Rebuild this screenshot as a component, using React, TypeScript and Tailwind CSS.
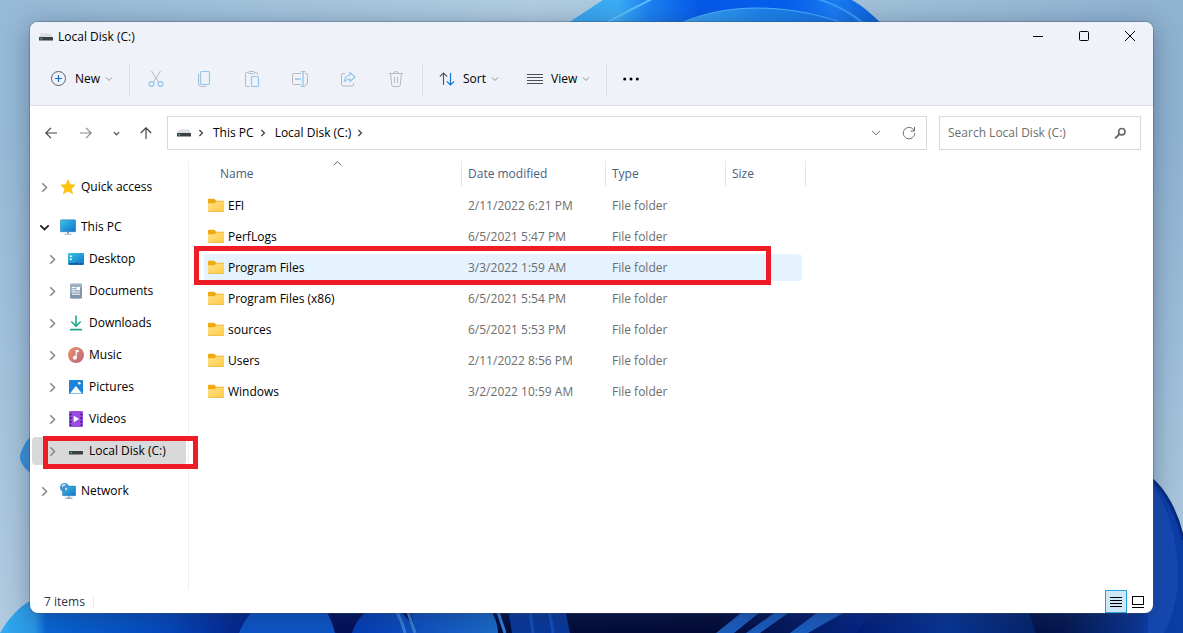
import React from "react";

type P = { className?: string };

const DriveIcon = ({ className = "" }: P) => (
  <svg viewBox="0 0 16 16" className={`h-4 w-4 shrink-0 ${className}`} aria-hidden="true">
    <path d="M3 4.5h10l1.800 4H1.200z" fill="#d9dde0" />
    <rect x="1" y="8" width="14" height="3.600" rx="0.6" fill="#3b3f42" />
    <rect x="2.500" y="9" width="1.600" height="1.400" fill="#2fd08a" />
  </svg>
);

const Chevron = ({ dir, className = "", size = 8 }: P & { dir: "right" | "down" | "up"; size?: number }) => {
  const d = { right: "M3 1.2 6.8 5 3 8.8", down: "M1.2 3 5 6.8 8.8 3", up: "M1 6.8 5 3 9 6.8" }[dir];
  return (
    <svg viewBox="0 0 10 10" width={size} height={size} className={`shrink-0 ${className}`} fill="none" stroke="currentColor" aria-hidden="true">
      <path d={d} />
    </svg>
  );
};

const FolderIcon = () => (
  <svg viewBox="0 0 16 16" className="h-4 w-4 shrink-0" aria-hidden="true">
    <defs>
      <linearGradient id="fold" x1="0" y1="0" x2="1" y2="1">
        <stop offset="0" stopColor="#ffe08a" />
        <stop offset="1" stopColor="#ffcb45" />
      </linearGradient>
    </defs>
    <path d="M0 1.600C0 1.200.4.800 1 .800h5.300l1.900 1.900H15c.6 0 1 .4 1 1V9H0z" fill="#efaa12" />
    <path d="M0 5.300h6.400L8.200 3.500H16v9.300c0 .6-.4 1-1 1H1c-.6 0-1-.4-1-1z" fill="url(#fold)" />
    <path d="M.4 13.400h15.200" stroke="#e9b032" strokeWidth=".7" />
  </svg>
);

const StarIcon = () => (
  <svg viewBox="0 0 16 16" className="h-4 w-4 shrink-0" aria-hidden="true">
    <path d="m8 .8 2.100 4.800 5.200.5-3.900 3.500 1.200 5.200L8 12.100l-4.600 2.700 1.200-5.200L.7 6.100l5.200-.5z" fill="#ffc20e" stroke="#f5b301" strokeWidth=".5" strokeLinejoin="round" />
  </svg>
);

const ScreenGradient = () => (
  <linearGradient id="scr" x1="0" y1="0" x2="1" y2="1">
    <stop offset="0" stopColor="#38c6e0" />
    <stop offset="1" stopColor="#1272cf" />
  </linearGradient>
);

const PcIcon = () => (
  <svg viewBox="0 0 16 16" className="h-4 w-4 shrink-0" aria-hidden="true">
    <defs><ScreenGradient /></defs>
    <rect x=".3" y=".8" width="15.400" height="11.900" rx=".8" fill="url(#scr)" stroke="#1a6fae" strokeWidth=".5" />
    <path d="M7 12.700h2v2H7z" fill="#7d9bb0" />
    <path d="M4.500 15.200h7" stroke="#9fb0bc" strokeWidth="1" />
  </svg>
);

const DesktopIcon = () => (
  <svg viewBox="0 0 16 16" className="h-4 w-4 shrink-0" aria-hidden="true">
    <defs><ScreenGradient /></defs>
    <rect x="0" y="2" width="16" height="12" rx="1.200" fill="url(#scr)" />
    <path d="M2 4.500h1.800v1.500H2zM2 7.500h1.800V9H2z" fill="#fff" />
    <path d="M1 12.800h10M12 12.800h1.500M14.200 12.800h1" stroke="#0a4a86" strokeWidth="1.200" />
  </svg>
);

const DocumentsIcon = () => (
  <svg viewBox="0 0 16 16" className="h-4 w-4 shrink-0" aria-hidden="true">
    <rect x="2" y=".5" width="12" height="15" rx="1.200" fill="#9db1c3" />
    <path d="M2 11 14 4v10.300c0 .7-.5 1.200-1.200 1.200H3.200c-.7 0-1.200-.5-1.200-1.200z" fill="#7f96ac" />
    <path d="M4 4.500h3.500M4 6.700h3.500M4 9h8M4 11.300h8" stroke="#fff" strokeWidth="1.100" />
    <rect x="8.500" y="4" width="3.500" height="3.300" fill="#fff" />
  </svg>
);

const DownloadsIcon = () => (
  <svg viewBox="0 0 16 16" className="h-4 w-4 shrink-0" fill="none" strokeWidth="1.700" aria-hidden="true">
    <path d="M8 .5v10.500M3.300 6.500 8 11.200l4.700-4.700" stroke="#27b08f" />
    <path d="M2 14.600h12" stroke="#1f9f86" />
  </svg>
);

const MusicIcon = () => (
  <svg viewBox="0 0 16 16" className="h-4 w-4 shrink-0" aria-hidden="true">
    <defs>
      <linearGradient id="mus" x1="0" y1="0" x2="1" y2="1">
        <stop offset="0" stopColor="#eb9468" />
        <stop offset="1" stopColor="#b9657d" />
      </linearGradient>
    </defs>
    <circle cx="8" cy="8" r="8" fill="url(#mus)" />
    <path d="M8.200 3v7.200" stroke="#fff" strokeWidth="1.200" />
    <path d="M8 3h2.800v2.200H8z" fill="#fff" />
    <circle cx="6.900" cy="10.700" r="2" fill="#fff" />
  </svg>
);

const PicturesIcon = () => (
  <svg viewBox="0 0 16 16" className="h-4 w-4 shrink-0" aria-hidden="true">
    <rect x="1" y="1" width="14" height="14" rx="1" fill="#1c84d8" />
    <path d="m2 14.500 5-6.500c.5-.6 1.300-.6 1.800 0l5.200 6.500z" fill="#fff" />
    <circle cx="11.300" cy="4.200" r="1.300" fill="#fff" />
  </svg>
);

const VideosIcon = () => (
  <svg viewBox="0 0 16 16" className="h-4 w-4 shrink-0" aria-hidden="true">
    <rect x="1" y="0" width="14" height="16" rx="1.200" fill="#9a4de0" />
    <path d="M2.700 2.500v12M13.300 2.500v12" stroke="#40197c" strokeWidth="1.700" strokeDasharray="2 1.600" />
    <path d="M5.700 4.700 11.200 8l-5.500 3.300z" fill="#fff" />
  </svg>
);

const NetworkIcon = () => (
  <svg viewBox="0 0 16 16" className="h-4 w-4 shrink-0" aria-hidden="true">
    <defs><ScreenGradient /></defs>
    <rect x="2.500" y="3" width="13.200" height="9.700" rx=".6" fill="url(#scr)" stroke="#1a6fae" strokeWidth=".4" />
    <path d="M9 12.700v2M5.500 15.200h7" stroke="#6a8496" />
    <circle cx="4.500" cy="4.500" r="4.500" fill="#3f93cf" />
    <path d="M1.500 2.500c1.500-1.800 3.500-1.500 4.500-1L4.500 3 3 3.200 2.500 5zM5 5l2.300-.5c.5 1.500-.8 3-2 3.400z" fill="#bfe0f2" />
  </svg>
);

const grey = "#b4b9c0";
const blue = "#93c6ea";

const ToolIcon = ({ children }: { children: React.ReactNode }) => (
  <svg viewBox="0 0 16 16" className="h-4 w-4" fill="none" stroke={grey} aria-hidden="true">{children}</svg>
);

const tools = [
  {
    name: "Cut",
    icon: <ToolIcon><path d="M3.500 0 10.500 11M12.500 0l-7 11" /><circle cx="3.500" cy="13" r="2.400" stroke={blue} strokeWidth="1.300" /><circle cx="12.500" cy="13" r="2.400" stroke={blue} strokeWidth="1.300" /></ToolIcon>,
  },
  {
    name: "Copy",
    icon: <ToolIcon><path d="M2.500 3v9.500a3 3 0 0 0 3 3H10" /><rect x="4.500" y=".5" width="9" height="13" rx="1.500" stroke={blue} strokeWidth="1.200" /></ToolIcon>,
  },
  {
    name: "Paste",
    icon: <ToolIcon><path d="M4.500 1.500h-2a1 1 0 0 0-1 1v12a1 1 0 0 0 1 1h3M11 1.500h1.500a1 1 0 0 1 1 1V4" /><rect x="4.500" y=".5" width="6" height="2" rx="1" /><rect x="7.500" y="5.500" width="7" height="10" rx="1.200" stroke={blue} strokeWidth="1.200" /></ToolIcon>,
  },
  {
    name: "Rename",
    icon: <ToolIcon><path d="M9 2.500H2A1.500 1.500 0 0 0 .5 4v8A1.500 1.500 0 0 0 2 13.500h7M13 2.500h1A1.500 1.500 0 0 1 15.500 4v8a1.500 1.500 0 0 1-1.500 1.500h-1" /><path d="M11 .5v15M8.700.5h4.600M8.700 15.500h4.600M3 8h6" stroke={blue} strokeWidth="1.300" /></ToolIcon>,
  },
  {
    name: "Share",
    icon: <ToolIcon><path d="M5 2.500H3A1.500 1.500 0 0 0 1.500 4v9.500A1.500 1.500 0 0 0 3 15h9a1.500 1.500 0 0 0 1.500-1.500V12" /><path d="M10 1.500 15 6l-5 4.500V8C7.500 8 6 8.700 4.200 10.700 4.500 7.500 6.500 4.200 10 4z" stroke={blue} strokeWidth="1.200" strokeLinejoin="round" /></ToolIcon>,
  },
  {
    name: "Delete",
    icon: <ToolIcon><path d="M.8 2.500h14.400M2.500 2.500l1.300 11.800c.1.700.6 1.200 1.300 1.200h5.800c.7 0 1.200-.5 1.300-1.200l1.300-11.800M5.700 2.500a2.300 2 0 0 1 4.600 0M6.500 6v6M9.500 6v6" /></ToolIcon>,
  },
];

type Item = { name: string; icon: React.ReactNode; selected?: boolean };
const pcItems: Item[] = [
  { name: "Desktop", icon: <DesktopIcon /> },
  { name: "Documents", icon: <DocumentsIcon /> },
  { name: "Downloads", icon: <DownloadsIcon /> },
  { name: "Music", icon: <MusicIcon /> },
  { name: "Pictures", icon: <PicturesIcon /> },
  { name: "Videos", icon: <VideosIcon /> },
  { name: "Local Disk (C:)", icon: <DriveIcon />, selected: true },
];

const files = [
  ["EFI", "2/11/2022 6:21 PM"],
  ["PerfLogs", "6/5/2021 5:47 PM"],
  ["Program Files", "3/3/2022 1:59 AM"],
  ["Program Files (x86)", "6/5/2021 5:54 PM"],
  ["sources", "6/5/2021 5:53 PM"],
  ["Users", "2/11/2022 8:56 PM"],
  ["Windows", "3/2/2022 10:59 AM"],
];

const Wallpaper = () => (
  <svg viewBox="0 0 1183 633" preserveAspectRatio="none" className="absolute inset-0 h-full w-full" aria-hidden="true">
    <defs>
      <linearGradient id="sky" x1="0" y1="0" x2="1" y2="0">
        <stop offset="0" stopColor="#96b9d5" />
        <stop offset=".45" stopColor="#b1cde1" />
        <stop offset=".75" stopColor="#a0c0d8" />
        <stop offset="1" stopColor="#8fb2d0" />
      </linearGradient>
      <linearGradient id="low" x1="0" y1="0" x2="0" y2="1">
        <stop offset=".2" stopColor="#b0cbe0" stopOpacity="0" />
        <stop offset="1" stopColor="#b0cbe0" />
      </linearGradient>
      <linearGradient id="top" x1="0" y1="0" x2="1" y2="0">
        <stop offset="0" stopColor="#38a4ee" />
        <stop offset=".16" stopColor="#3badf6" />
        <stop offset=".26" stopColor="#1b82f2" />
        <stop offset=".42" stopColor="#0659ea" />
        <stop offset=".7" stopColor="#0560ee" />
        <stop offset=".85" stopColor="#1a7cf4" />
        <stop offset="1" stopColor="#0a5fd8" />
      </linearGradient>
      <linearGradient id="arc" x1="0" y1="0" x2="1" y2="0">
        <stop offset="0" stopColor="#3aa6f6" />
        <stop offset=".5" stopColor="#1c84ec" />
        <stop offset="1" stopColor="#1372ea" />
      </linearGradient>
      <linearGradient id="base" x1="0" y1="0" x2="1" y2="0">
        <stop offset="0" stopColor="#33a9f2" />
        <stop offset=".03" stopColor="#2a97e4" />
        <stop offset=".04" stopColor="#0766d6" />
        <stop offset=".14" stopColor="#044ac0" />
        <stop offset=".22" stopColor="#021f86" />
        <stop offset=".29" stopColor="#02105c" />
        <stop offset=".45" stopColor="#020b3a" />
        <stop offset=".62" stopColor="#020a35" />
        <stop offset=".75" stopColor="#03258a" />
        <stop offset=".86" stopColor="#020c40" />
        <stop offset=".92" stopColor="#04164f" />
        <stop offset="1" stopColor="#0a3da6" />
      </linearGradient>
      <linearGradient id="petal" x1="0" y1="0" x2="1" y2="0">
        <stop offset="0" stopColor="#033bb8" />
        <stop offset="1" stopColor="#1b6ccc" />
      </linearGradient>
      <linearGradient id="dusk" x1="0" y1="0" x2="1" y2="0">
        <stop offset="0" stopColor="#021c78" />
        <stop offset=".5" stopColor="#063596" />
        <stop offset="1" stopColor="#04226a" />
      </linearGradient>
    </defs>
    <path d="M0 0h1183v633H0z" fill="url(#sky)" />
    <path d="M0 0h1183v633H0z" fill="url(#low)" />
    <path d="M568 23C582 14 592 7 606-2h242c14 7 22 15 33 25z" fill="url(#top)" />
    <path d="M608 22C622 14 638 6 656-3" fill="none" stroke="#5cc0f8" strokeWidth="2" />
    <path d="M681 23c45-20 105-20 162 0z" fill="url(#arc)" />
    <path d="M681 23c45-20 105-20 162 0" fill="none" stroke="#4fb2fa" />
    <path d="M815-2c20 6 36 15 48 25" fill="none" stroke="#3a9cfa" strokeWidth="2" />
    <path d="M32 434C24 444 20 452 20 457s4 12 12 17z" fill="#3b91dc" />
    <path d="M0 633C10 616 20 606 32 600h1125v33z" fill="url(#base)" />
    <path d="M1150 478c15 12 28 36 33 62v93h-40z" fill="#0b3da5" />
    <path d="M1150 485c18 18 26 50 28 85 1 28-6 48-14 63h-16z" fill="#1548b2" />
    <path d="M1150 478c15 12 28 36 33 62" fill="none" stroke="#062a82" strokeWidth="3" />
    <path d="M239 633c5-12 10-20 18-24h68c5 8 8 16 10 24z" fill="#0b55c8" />
    <path d="M352 633c4-12 10-20 20-24h25c10 8 16 16 19 24zM410 609h80c5 8 8 16 8 24h-82z" fill="url(#petal)" />
    <path d="M395 609c5 8 8 16 10 24M407 609l8 24M497 609l8 24M530 609l3 24M549 609l4 24" stroke="#3182dc" strokeWidth="3" fill="none" />
    <path d="M508 609h57l5 24h-58z" fill="#0a43b5" opacity=".8" />
    <path d="M716 633l30-24h18l-30 24zM746 633l34-24h14l-34 24zM790 633l32-24h28l-42 24z" fill="#1b5dc0" />
    <path d="M856 633l18-24h154l8 24z" fill="url(#dusk)" />
  </svg>
);

const MARK = "pointer-events-none absolute z-10 border-[5px] border-[#ee1c24]";

function TreeRow({ item, level = 0, open = false }: { item: Item; level?: number; open?: boolean }) {
  return (
    <div className="relative flex h-8 items-center px-[2px]">
      <button
        type="button"
        className={`flex h-7 w-full items-center rounded-sm ${level ? "pl-[15px]" : "pl-[7px]"} ${item.selected ? "bg-[#d9d9d9]" : ""}`}
      >
        <Chevron dir={open ? "down" : "right"} size={11} className={open ? "text-[#222] [stroke-width:1.6]" : "text-[#888] [stroke-width:1.4]"} />
        <span className="ml-[10px] flex items-center gap-[5px]">
          {item.icon}
          <span className="whitespace-nowrap">{item.name}</span>
        </span>
      </button>
      {item.selected && <span className={`${MARK} -right-[10px] bottom-[-2px] left-[13px] top-[1px]`} />}
    </div>
  );
}

const Divider = () => <span className="h-8 w-px bg-[#dadfe5]" />;

export default function App() {
  return (
    <div className="relative flex h-screen min-h-[500px] flex-col px-[30px] pb-5 pt-[22px] font-['Open_Sans','Noto_Sans',sans-serif] text-[12px] leading-4 text-black">
      <Wallpaper />
      <main className="relative flex min-h-0 flex-1 flex-col overflow-hidden rounded-lg bg-white shadow-[0_0_0_1px_rgba(60,80,110,0.35),0_4px_26px_rgba(30,50,90,0.45)]">
        <header className="border-b border-[#dbe0e6] bg-[#eff3f9]">
          <div className="flex h-[30px] items-center pl-2">
            <DriveIcon />
            <h1 className="ml-1 flex-1">Local Disk (C:)</h1>
            <div className="flex self-start">
              <button type="button" aria-label="Minimize" className="flex h-7 w-[46px] items-center justify-center">
                <svg viewBox="0 0 10 10" className="h-[10px] w-[10px]" stroke="#000"><path d="M0 5.500h10" /></svg>
              </button>
              <button type="button" aria-label="Maximize" className="flex h-7 w-[46px] items-center justify-center">
                <svg viewBox="0 0 10 10" className="h-[10px] w-[10px]" stroke="#000" fill="none"><rect x=".5" y=".5" width="9" height="9" rx="1" /></svg>
              </button>
              <button type="button" aria-label="Close" className="flex h-7 w-[46px] items-center justify-center">
                <svg viewBox="0 0 10 10" className="h-[10px] w-[10px]" stroke="#000"><path d="m0 0 10 10M10 0 0 10" /></svg>
              </button>
            </div>
          </div>
          <div role="toolbar" aria-label="Commands" className="flex h-[53px] items-center">
            <button type="button" className="flex h-8 w-[99px] items-center pl-5">
              <svg viewBox="0 0 16 16" className="h-4 w-4" fill="none" aria-hidden="true">
                <circle cx="8.500" cy="7.500" r="7" stroke="#5c6066" />
                <path d="M8.500 4v7M5 7.500h7" stroke="#0a6fc9" strokeWidth="1.200" />
              </svg>
              <span className="ml-[9px]">New</span>
              <Chevron dir="down" className="ml-[5px] text-[#777]" />
            </button>
            <Divider />
            <div className="flex px-[2px]">
              {tools.map((t) => (
                <button key={t.name} type="button" aria-label={t.name} className="flex h-8 w-12 items-center justify-center">{t.icon}</button>
              ))}
            </div>
            <Divider />
            <button type="button" className="flex h-8 w-[88px] items-center pl-4">
              <svg viewBox="0 0 16 16" className="h-4 w-4" fill="none" aria-hidden="true">
                <path d="M4.500 14V2M.8 5.700 4.500 2l3.700 3.700" stroke="#50555b" strokeWidth="1.100" />
                <path d="M11.500 2v12M7.800 10.300l3.700 3.700 3.700-3.700" stroke="#0f78d0" strokeWidth="1.200" />
              </svg>
              <span className="ml-2">Sort</span>
              <Chevron dir="down" className="ml-[5px] text-[#777]" />
            </button>
            <button type="button" className="flex h-8 w-[95px] items-center pl-4">
              <svg viewBox="0 0 16 16" className="h-4 w-4" stroke="#4c4f54" aria-hidden="true"><path d="M0 3.500h16M0 6.500h16M0 9.500h16M0 12.500h16" /></svg>
              <span className="ml-2">View</span>
              <Chevron dir="down" className="ml-[5px] text-[#777]" />
            </button>
            <Divider />
            <button type="button" aria-label="See more" className="flex h-8 w-12 items-center justify-center">
              <svg viewBox="0 0 16 4" className="h-1 w-4"><circle cx="1.700" cy="2" r="1.500" /><circle cx="8" cy="2" r="1.500" /><circle cx="14.300" cy="2" r="1.500" /></svg>
            </button>
          </div>
        </header>

        <div className="flex items-center px-3 py-[10px]">
          <div className="flex w-[125px] items-center text-[#555]">
            <button type="button" aria-label="Back" className="flex w-[18px] justify-center">
              <svg viewBox="0 0 12 12" className="h-3 w-3" fill="none" stroke="#444" strokeWidth="1.200"><path d="M12 6H.8M6 .8.8 6 6 11.200" /></svg>
            </button>
            <button type="button" aria-label="Forward" className="ml-[17px] flex w-[18px] justify-center">
              <svg viewBox="0 0 12 12" className="h-3 w-3" fill="none" stroke="#8c8c8c" strokeWidth="1.200"><path d="M0 6h11.200M6 .8 11.200 6 6 11.200" /></svg>
            </button>
            <button type="button" aria-label="Recent locations" className="ml-[12px] flex w-[18px] justify-center">
              <Chevron dir="down" size={7} className="[stroke-width:1.8]" />
            </button>
            <button type="button" aria-label="Up" className="ml-[12px] flex w-[18px] justify-center">
              <svg viewBox="0 0 12 12" className="h-3 w-3" fill="none" stroke="#444" strokeWidth="1.200"><path d="M6 12V.8M.8 6 6 .8 11.200 6" /></svg>
            </button>
          </div>
          <nav aria-label="Address" className="flex h-[34px] flex-1 items-center border border-[#d9d9d9] pl-2 pr-[10px]">
            <DriveIcon />
            <Chevron dir="right" className="ml-[5px] text-[#444] [stroke-width:1.6]" />
            <a href="#pc" className="ml-[8px]">This PC</a>
            <Chevron dir="right" className="ml-[5px] text-[#444] [stroke-width:1.6]" />
            <a href="#c" className="ml-[8px]">Local Disk (C:)</a>
            <Chevron dir="right" className="ml-[5px] text-[#444] [stroke-width:1.6]" />
            <span className="flex-1" />
            <button type="button" aria-label="Previous locations"><Chevron dir="down" size={10} className="text-[#666]" /></button>
            <button type="button" aria-label="Refresh" className="ml-[21px]">
              <svg viewBox="0 0 14 14" className="h-[14px] w-[14px]" fill="none" stroke="#6b6b6b"><path d="M12.300 5A5.700 5.700 0 1 0 12.700 7M12.500 1v4h-4" /></svg>
            </button>
          </nav>
          <label className="ml-3 flex h-[34px] w-[202px] items-center border border-[#d9d9d9] pl-2 pr-[14px]">
            <input type="text" aria-label="Search Local Disk (C:)" placeholder="Search Local Disk (C:)" className="min-w-0 flex-1 bg-transparent outline-none placeholder:text-[#6d6d6d]" />
            <svg viewBox="0 0 12 12" className="h-3 w-3" fill="none" stroke="#666"><circle cx="7.800" cy="4.700" r="3.200" strokeWidth="1.600" /><path d="M5.500 7 1 11.500" strokeWidth="1.800" /></svg>
          </label>
        </div>

        <div className="flex min-h-0 flex-1">
          <nav aria-label="Folders" className="mt-px w-[159px] shrink-0 border-r border-[#f0f0f0] pt-[10px]">
            <TreeRow item={{ name: "Quick access", icon: <StarIcon /> }} />
            <div className="my-2">
              <TreeRow open item={{ name: "This PC", icon: <PcIcon /> }} />
              {pcItems.map((i) => (
                <TreeRow key={i.name} item={i} level={1} />
              ))}
            </div>
            <TreeRow item={{ name: "Network", icon: <NetworkIcon /> }} />
          </nav>

          <section aria-label="Files" className="min-w-0 flex-1 pl-[15px] pt-px">
            <table className="w-[602px] table-fixed border-collapse text-left">
              <colgroup>
                <col className="w-[258px]" />
                <col className="w-[144px]" />
                <col className="w-[120px]" />
                <col className="w-[80px]" />
              </colgroup>
              <thead className="text-[#4a6080]">
                <tr>
                  {["Name", "Date modified", "Type", "Size"].map((h, i) => (
                    <th key={h} className="p-0 pb-1 font-normal">
                      <div className={`relative flex h-[25px] items-center border-r border-[#e5e5e5] ${i ? "pl-[6px]" : "pl-4"}`}>
                        {h}
                        {i === 0 && <Chevron dir="up" size={9} className="absolute left-[129px] top-[-2px] text-[#555]" />}
                      </div>
                    </th>
                  ))}
                </tr>
              </thead>
              <tbody className="text-[#6d6d6d]">
                {files.map(([name, date]) => {
                  const hot = name === "Program Files";
                  const cell = `flex h-[27px] items-center ${hot ? "bg-[#e5f3ff]" : ""}`;
                  return (
                    <tr key={name} className="h-[31px]">
                      <td className="relative p-0">
                        <div className={`${cell} rounded-l-sm pl-1 text-black`}>
                          <FolderIcon />
                          <span className="ml-1 whitespace-nowrap">{name}</span>
                        </div>
                        {hot && <span className={`${MARK} -left-[10px] -top-[6px] h-[39px] w-[577px]`} />}
                      </td>
                      <td className="p-0"><div className={`${cell} whitespace-nowrap pl-[6px]`}>{date}</div></td>
                      <td className="p-0"><div className={`${cell} whitespace-nowrap pl-[6px]`}>File folder</div></td>
                      <td className="p-0"><div className={`${cell} mr-1 rounded-r-sm`} /></td>
                    </tr>
                  );
                })}
              </tbody>
            </table>
          </section>
        </div>

        <footer className="flex h-[23px] shrink-0 items-center pl-[14px] pr-1 text-[#27364f]">
          <span>7 items</span>
          <span className="ml-[8px] h-3 w-px bg-[#ececec]" />
          <span className="flex-1" />
          <button type="button" aria-label="Details view" className="flex h-[23px] w-[22px] items-center justify-center border border-[#26a0da] bg-[#cce8f6]">
            <svg viewBox="0 0 12 12" className="h-3 w-3" stroke="#000"><path d="M0 1.500h12M0 4.500h12M0 7.500h12M0 10.500h12" /></svg>
          </button>
          <button type="button" aria-label="Large icons view" className="flex h-[23px] w-[22px] items-center justify-center">
            <svg viewBox="0 0 12 12" className="h-3 w-3" stroke="#000" fill="none"><rect x=".5" y=".5" width="11" height="8" /><path d="M0 11.500h12" /></svg>
          </button>
        </footer>
      </main>
    </div>
  );
}
